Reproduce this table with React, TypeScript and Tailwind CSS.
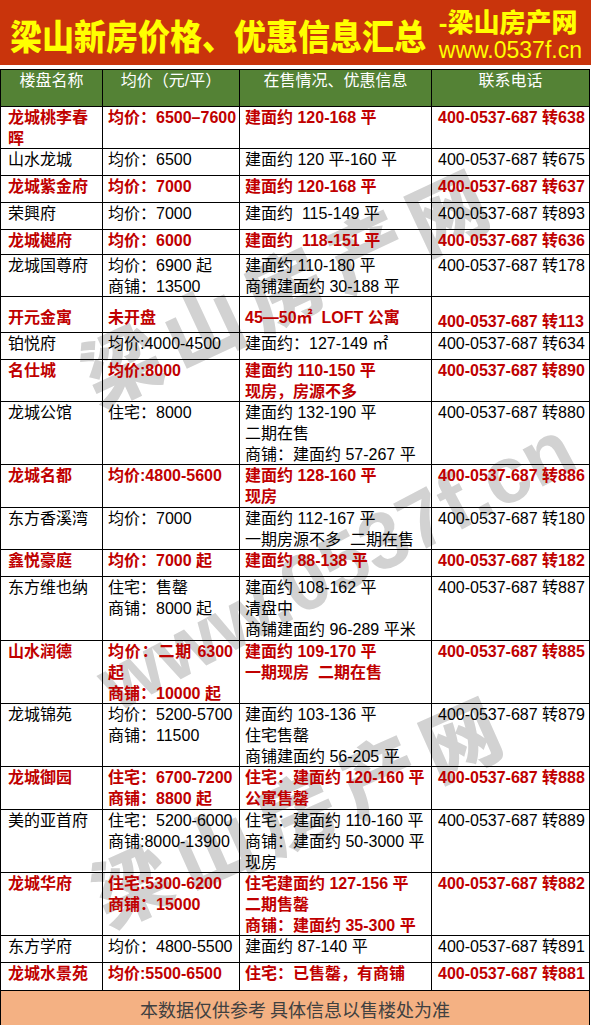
import clsx from 'clsx';

interface Row {
  red?: boolean;
  h: string;
  name: string[];
  price: string[];
  info: string[];
  ext: string;
  justifyPrice?: boolean;
  lowered?: boolean;
}

const rows: Row[] = [
  { red: true, h: 'h-[42px]', name: ['龙城桃李春', '晖'], price: ['均价：6500–7600'], info: ['建面约 120-168 平'], ext: '638' },
  { h: 'h-[27px]', name: ['山水龙城'], price: ['均价：6500'], info: ['建面约 120 平-160 平'], ext: '675' },
  { red: true, h: 'h-[27px]', name: ['龙城紫金府'], price: ['均价：7000'], info: ['建面约 120-168 平'], ext: '637' },
  { h: 'h-[27px]', name: ['荣興府'], price: ['均价：7000'], info: ['建面约  115-149 平'], ext: '893' },
  { red: true, h: 'h-[25px]', name: ['龙城樾府'], price: ['均价：6000'], info: ['建面约  118-151 平'], ext: '636' },
  { h: 'h-[42px]', name: ['龙城国尊府'], price: ['均价：6900 起', '商铺：13500'], info: ['建面约 110-180 平', '商铺建面约 30-188 平'], ext: '178' },
  { red: true, h: 'h-[36px]', name: ['开元金寓'], price: ['未开盘'], info: ['45—50㎡  LOFT 公寓'], ext: '113', lowered: true },
  { h: 'h-[27px]', name: ['铂悦府'], price: ['均价:4000-4500'], info: ['建面约：127-149 ㎡'], ext: '634' },
  { red: true, h: 'h-[42px]', name: ['名仕城'], price: ['均价:8000'], info: ['建面约 110-150 平', '现房，房源不多'], ext: '890' },
  { h: 'h-[63px]', name: ['龙城公馆'], price: ['住宅：8000'], info: ['建面约 132-190 平', '二期在售', '商铺：建面约 57-267 平'], ext: '880' },
  { red: true, h: 'h-[43px]', name: ['龙城名都'], price: ['均价:4800-5600'], info: ['建面约 128-160 平', '现房'], ext: '886' },
  { h: 'h-[42px]', name: ['东方香溪湾'], price: ['均价：7000'], info: ['建面约 112-167 平', '一期房源不多  二期在售'], ext: '180' },
  { red: true, h: 'h-[27px]', name: ['鑫悦豪庭'], price: ['均价：7000 起'], info: ['建面约 88-138 平'], ext: '182' },
  { h: 'h-[64px]', name: ['东方维也纳'], price: ['住宅：售罄', '商铺：8000 起'], info: ['建面约 108-162 平', '清盘中', '商铺建面约 96-289 平米'], ext: '887' },
  { red: true, h: 'h-[63px]', name: ['山水润德'], price: ['均价：二期 6300', '起', '商铺：10000 起'], info: ['建面约 109-170 平', '一期现房  二期在售'], ext: '885', justifyPrice: true },
  { h: 'h-[63px]', name: ['龙城锦苑'], price: ['均价：5200-5700', '商铺：11500'], info: ['建面约 103-136 平', '住宅售罄', '商铺建面约 56-205 平'], ext: '879' },
  { red: true, h: 'h-[43px]', name: ['龙城御园'], price: ['住宅：6700-7200', '商铺：8800 起'], info: ['住宅：建面约 120-160 平', '公寓售罄'], ext: '888' },
  { h: 'h-[63px]', name: ['美的亚首府'], price: ['住宅：5200-6000', '商铺:8000-13900'], info: ['住宅：建面约 110-160 平', '商铺：建面约 50-3000 平', '现房'], ext: '889' },
  { red: true, h: 'h-[63px]', name: ['龙城华府'], price: ['住宅:5300-6200', '商铺：15000'], info: ['住宅建面约 127-156 平', '二期售罄', '商铺：建面约 35-300 平'], ext: '882' },
  { h: 'h-[27px]', name: ['东方学府'], price: ['均价：4800-5500'], info: ['建面约 87-140 平'], ext: '891' },
  { red: true, h: 'h-[28px]', name: ['龙城水景苑'], price: ['均价:5500-6500'], info: ['住宅：已售罄，有商铺'], ext: '881' },
];

const cellFont = "font-['Liberation_Sans','Noto_Sans_CJK_SC',sans-serif]";

function Lines({ lines, className, justifyFirst }: { lines: string[]; className?: string; justifyFirst?: boolean }) {
  return (
    <div className={clsx('border-r border-black whitespace-pre leading-[21px]', className)}>
      {lines.map((line, i) => (
        <div
          key={i}
          className={clsx(justifyFirst && i === 0 && 'whitespace-normal text-justify [text-align-last:justify]')}
        >
          {line}
        </div>
      ))}
    </div>
  );
}

export default function App() {
  return (
    <div className="relative w-[591px] bg-white overflow-hidden">
      {/* title band */}
      <div className="h-[65px] bg-[#c9340c] flex items-start text-[#ffff00]">
        <div className="pl-[10px] pt-[11px] text-[32px] leading-[40px] font-black font-['Noto_Sans_CJK_SC',sans-serif] scale-y-110 origin-top whitespace-nowrap">
          梁山新房价格、优惠信息汇总
        </div>
        <div className="ml-auto pr-[9px] flex flex-col items-start">
          <div className="pt-[7px] text-[26px] leading-[32px] font-black font-['Liberation_Sans','Noto_Sans_CJK_SC',sans-serif] whitespace-nowrap">
            -梁山房产网
          </div>
          <div className="-mt-[1px] text-[23px] leading-[24px] font-['Liberation_Sans',sans-serif] whitespace-nowrap">
            www.0537f.cn
          </div>
        </div>
      </div>

      {/* watermark */}
      <div className="pointer-events-none absolute inset-0 z-0 text-[#d2d2d2] font-black whitespace-nowrap">
        <div className="absolute left-[288px] top-[282px] -translate-x-1/2 -translate-y-1/2 -rotate-[25deg] text-[78px] leading-none tracking-[12px] font-['Noto_Sans_CJK_SC',sans-serif]">
          梁山房产网
        </div>
        <div className="absolute left-[336px] top-[566px] -translate-x-1/2 -translate-y-1/2 -rotate-[28deg] text-[80px] leading-none font-bold font-['Liberation_Sans',sans-serif]">
          www.0537f.cn
        </div>
        <div className="absolute left-[300px] top-[806px] -translate-x-1/2 -translate-y-1/2 -rotate-[24deg] text-[78px] leading-none tracking-[12px] font-['Noto_Sans_CJK_SC',sans-serif]">
          梁山房产网
        </div>
      </div>

      {/* table */}
      <div className={clsx('relative z-10 mt-[4px] w-[590px] border-l border-t border-black text-[16px]', cellFont)}>
        <div className="h-[37px] grid grid-cols-[102px_137px_192px_158px] border-b border-black bg-[#548235] text-white text-center leading-[21px]">
          <div className="border-r border-black">楼盘名称</div>
          <div className="border-r border-black">均价（元/平）</div>
          <div className="border-r border-black">在售情况、优惠信息</div>
          <div className="border-r border-black">联系电话</div>
        </div>
        {rows.map((row) => (
          <div
            key={row.name.join('')}
            className={clsx(
              'grid grid-cols-[102px_137px_192px_158px] border-b border-black',
              row.h,
              row.red ? 'text-[#c00000] font-bold' : 'text-black'
            )}
          >
            <Lines lines={row.name} className={clsx('pl-[7px]', row.lowered && 'pt-[10px]')} />
            <Lines
              lines={row.price}
              justifyFirst={row.justifyPrice}
              className={clsx('pl-[5px] pr-[6px]', row.lowered && 'pt-[10px]')}
            />
            <Lines lines={row.info} className={clsx('pl-[5px]', row.lowered && 'pt-[10px]')} />
            <Lines
              lines={[`400-0537-687 转${row.ext}`]}
              className={clsx('pl-[6px]', row.lowered && 'pt-[14px]')}
            />
          </div>
        ))}
      </div>

      {/* footer */}
      <div className="relative z-10 w-[590px] h-[36px] border-x border-black bg-[#f4b183] flex items-center justify-center text-[18px] text-[#404040] font-['Noto_Sans_CJK_SC',sans-serif]">
        本数据仅供参考 具体信息以售楼处为准
      </div>
    </div>
  );
}
